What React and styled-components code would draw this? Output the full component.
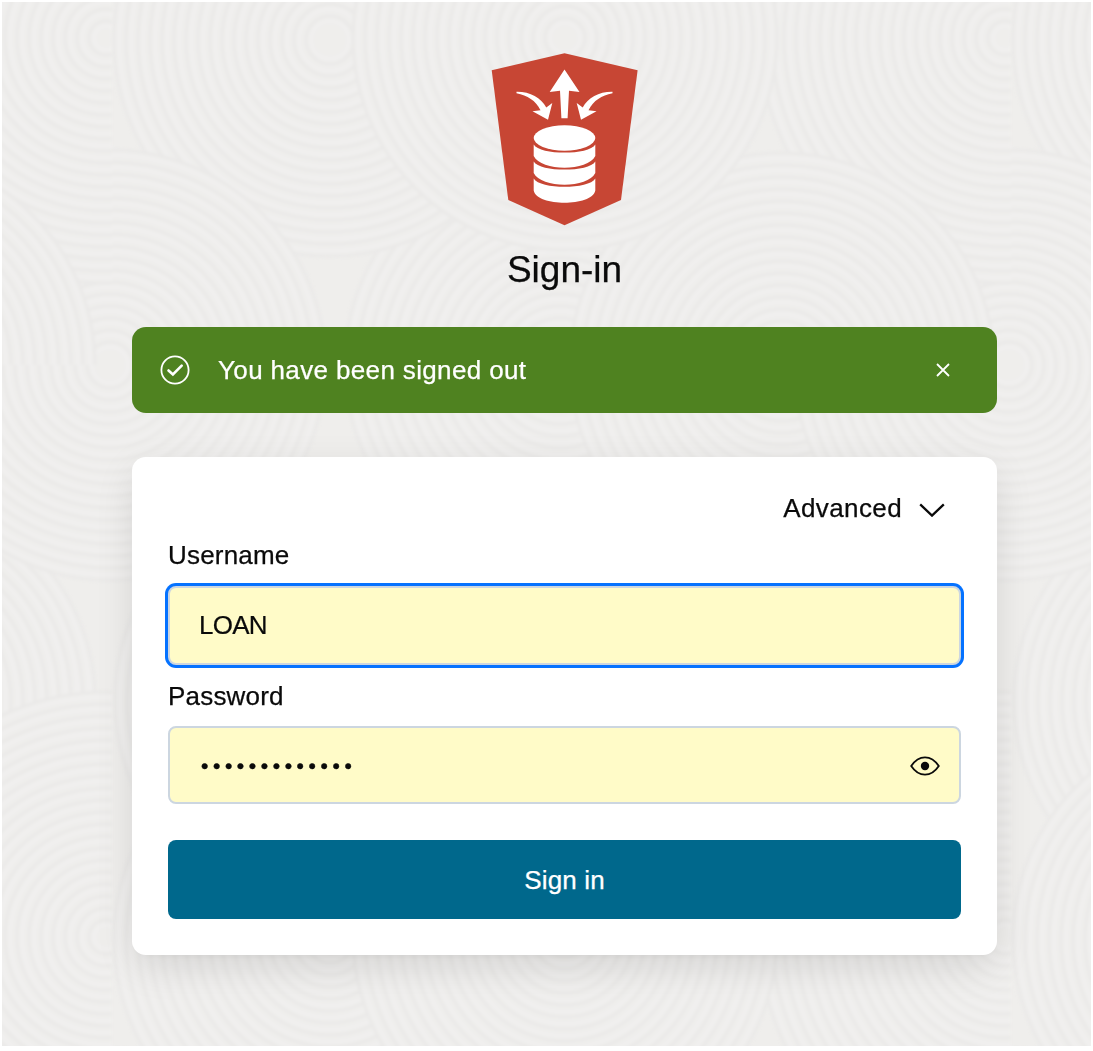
import React from "react";
import styled, { createGlobalStyle } from "styled-components";

const GlobalStyle = createGlobalStyle`
  * { box-sizing: border-box; }
  html, body { margin: 0; background: #fff; }
  body, input, button { font-family: "Liberation Sans", Arial, Helvetica, sans-serif; }
  body { -webkit-text-stroke: 0.25px currentColor; }
`;

const Frame = styled.main`
  position: relative;
  isolation: isolate;
  width: 1093px;
  height: 1051px;
  padding: 53px 96px 0 132px;
  display: flex;
  flex-direction: column;
  align-items: center;
  color: #0a0a0a;
  overflow: hidden;
`;

const Texture = styled.svg`
  position: absolute;
  z-index: -1;
  left: 2px;
  top: 2px;
  width: 1089px;
  height: 1044px;
`;

const Logo = styled.svg`
  width: 147px;
  height: 173px;
  flex: none;
`;

const Title = styled.h1`
  margin: 22px 0 0;
  font-size: 37px;
  line-height: 44px;
  font-weight: 400;
  height: 44px;
`;

const Banner = styled.div`
  display: flex;
  align-items: center;
  width: 865px;
  height: 86px;
  margin-top: 35px;
  padding: 0 46px 0 28px;
  border-radius: 14px;
  background: #4f8220;
  color: #fff;
`;

const BannerText = styled.p`
  flex: 1;
  margin: 0 0 0 28px;
  font-size: 26px;
  line-height: 30px;
  letter-spacing: 0.36px;
`;

const IconButton = styled.button`
  display: flex;
  align-items: center;
  justify-content: center;
  padding: 0;
  border: 0;
  background: none;
  color: inherit;
`;

const Card = styled.form`
  display: flex;
  flex-direction: column;
  width: 865px;
  height: 498px;
  margin-top: 44px;
  padding: 36px;
  border-radius: 14px;
  background: #fff;
  box-shadow: 0 12px 40px -4px rgba(0, 0, 0, 0.13), 0 4px 8px -4px rgba(0, 0, 0, 0.05);
`;

const Advanced = styled.button`
  display: flex;
  align-items: center;
  align-self: flex-end;
  gap: 17px;
  height: 32px;
  padding: 0;
  margin-right: 16px;
  border: 0;
  background: none;
  font-size: 26px;
  letter-spacing: 0.4px;
  color: #0a0a0a;
  -webkit-text-stroke: 0.25px currentColor;
`;

const Label = styled.label`
  height: 30px;
  margin-top: ${(p) => p.$top}px;
  font-size: 26px;
  line-height: 30px;
  letter-spacing: 0.2px;
`;

const Field = styled.div`
  display: flex;
  align-items: center;
  height: 79px;
  margin-top: ${(p) => p.$top}px;
  padding: ${(p) => (p.$focused ? "0 19px 0 29px" : "2px 19px 0 31px")};
  border: 2px solid #ccd6e0;
  border-radius: 8px;
  background: #fffbc8;
  box-shadow: ${(p) => (p.$focused ? "0 0 0 3px #0572ff" : "none")};
`;

const Input = styled.input`
  flex: 1;
  min-width: 0;
  padding: 0;
  border: 0;
  outline: 0;
  background: none;
  color: #0a0a0a;
  font-size: ${(p) => (p.type === "password" ? 21 : 26)}px;
  line-height: 30px;
  letter-spacing: ${(p) => (p.type === "password" ? 4.6 : -0.75)}px;
  -webkit-text-stroke: ${(p) => (p.type === "password" ? 0.4 : 0.2)}px currentColor;
`;

const Submit = styled.button`
  height: 79px;
  margin-top: 36px;
  padding: 2px 0 0;
  border: 0;
  border-radius: 8px;
  background: #00688c;
  color: #fff;
  font-size: 26px;
  letter-spacing: 0.15px;
  -webkit-text-stroke: 0.25px currentColor;
`;

const PERIOD = 899;
const discs = [
  { x: 789, y: 700, r: 205 },
  { x: 330, y: 700, r: 215 },
  { x: 560, y: 700, r: 215 },
  { x: 560, y: 365, r: 215 },
  { x: 110, y: 365, r: 215 },
  { x: 106, y: 38, r: 245, clip: "left" },
  { x: 782, y: 365, r: 212 },
  { x: 330, y: 40, r: 216 },
  { x: 110, y: 365, r: 215, clip: "sweep" },
  { x: 565, y: 38, r: 212 },
];
const shifts = [-PERIOD, 0, PERIOD];

function Disc({ x, y, r }) {
  const rings = [];
  for (let k = r; k > 12; k -= 12) rings.push(k);
  return (
    <g>
      <circle cx={x} cy={y} r={r} fill="#efeeec" />
      {rings.map((k) => (
        <React.Fragment key={k}>
          <circle cx={x} cy={y} r={k} fill="none" stroke="#eae9e8" strokeWidth="3" />
          <circle cx={x} cy={y} r={k - 5} fill="none" stroke="#f1f0ef" strokeWidth="3" />
        </React.Fragment>
      ))}
    </g>
  );
}

function Background() {
  return (
    <Texture viewBox="2 2 1089 1044" aria-hidden="true">
      <defs>
        <clipPath id="left">
          <rect x="-300" y="-300" width="412" height="700" />
        </clipPath>
        <clipPath id="sweep">
          <path d="M115 140H400V600H-200V365H115Z" />
        </clipPath>
        <filter id="soft">
          <feGaussianBlur stdDeviation="1.5" />
        </filter>
      </defs>
      <rect x="0" y="0" width="1093" height="1051" fill="#efeeec" />
      <g filter="url(#soft)">
        {discs.map((d, i) =>
          shifts.flatMap((dy) =>
            shifts.map((dx) => (
              <g key={`${i}-${dx}-${dy}`} transform={`translate(${dx} ${dy})`}>
                <g clipPath={d.clip ? `url(#${d.clip})` : undefined}>
                  <Disc {...d} />
                </g>
              </g>
            ))
          )
        )}
      </g>
    </Texture>
  );
}

function ShieldLogo() {
  return (
    <Logo viewBox="491 53 147 173" aria-hidden="true">
      <path d="M564.5 53.3 637.6 70.3 621 200 564.5 225.3 508.3 200 491.7 70.3Z" fill="#c74634" />
      <g fill="#fff">
        <path d="M564.5 69.5 579.5 92 569 90.8 567.6 118.2H561.4L560 90.8 549.7 92Z" />
        <path id="inflow" d="M516.5 91.7C530 91.5 541 97.5 546.3 107.5L552.3 103 548 119.7 532.5 111.3 540.5 110.2C535.5 100.5 527.5 95.5 516.5 93.3Z" />
        <use href="#inflow" transform="translate(1129 0) scale(-1 1)" />
        <ellipse cx="564.5" cy="138" rx="30.8" ry="12.7" />
        <path d="M533.7 144.4C540 155.3 589 155.3 595.3 144.4V156C588 171.5 541 171.5 533.7 156Z" />
        <path d="M533.7 161.4C540 172.3 589 172.3 595.3 161.4V173C588 188.5 541 188.5 533.7 173Z" />
        <path d="M533.7 178.4C540 189.5 589 189.5 595.3 178.4V190.4C592 206.8 537 206.8 533.7 190.4Z" />
      </g>
    </Logo>
  );
}

export default function App() {
  return (
    <>
      <GlobalStyle />
      <Frame>
        <Background />
        <ShieldLogo />
        <Title>Sign-in</Title>
        <Banner role="status">
          <svg width="30" height="30" viewBox="0 0 30 30" fill="none" stroke="#fff">
            <circle cx="15" cy="15" r="13.6" strokeWidth="1.8" />
            <path d="M8.5 15.5 12.9 19.5 21.7 10.6" strokeWidth="2.6" strokeLinecap="round" />
          </svg>
          <BannerText>You have been signed out</BannerText>
          <IconButton type="button" aria-label="Close">
            <svg width="16" height="16" viewBox="0 0 16 16" fill="none" stroke="#fff" strokeWidth="1.8">
              <path d="M2 2 14 14M14 2 2 14" />
            </svg>
          </IconButton>
        </Banner>
        <Card>
          <Advanced type="button">
            Advanced
            <svg width="26" height="16" viewBox="0 0 26 16" fill="none" stroke="#0a0a0a" strokeWidth="2.3">
              <path d="M1.2 3.3 13 14.6 24.8 3.3" />
            </svg>
          </Advanced>
          <Label $top={15} htmlFor="username">Username</Label>
          <Field $top={16} $focused>
            <Input id="username" type="text" defaultValue="LOAN" />
          </Field>
          <Label $top={16} htmlFor="password">Password</Label>
          <Field $top={15}>
            <Input id="password" type="password" defaultValue="0000000000000" />
            <IconButton type="button" aria-label="Show password">
              <svg width="30" height="20" viewBox="0 0 30 20" fill="none" stroke="#0a0a0a" strokeWidth="1.8">
                <path d="M1.2 10C5.2 4 9.8 1.3 15 1.3S24.8 4 28.8 10C24.8 16 20.2 18.7 15 18.7S5.2 16 1.2 10Z" />
                <circle cx="15" cy="10" r="4.2" fill="#0a0a0a" stroke="none" />
              </svg>
            </IconButton>
          </Field>
          <Submit type="button">Sign in</Submit>
        </Card>
      </Frame>
    </>
  );
}
